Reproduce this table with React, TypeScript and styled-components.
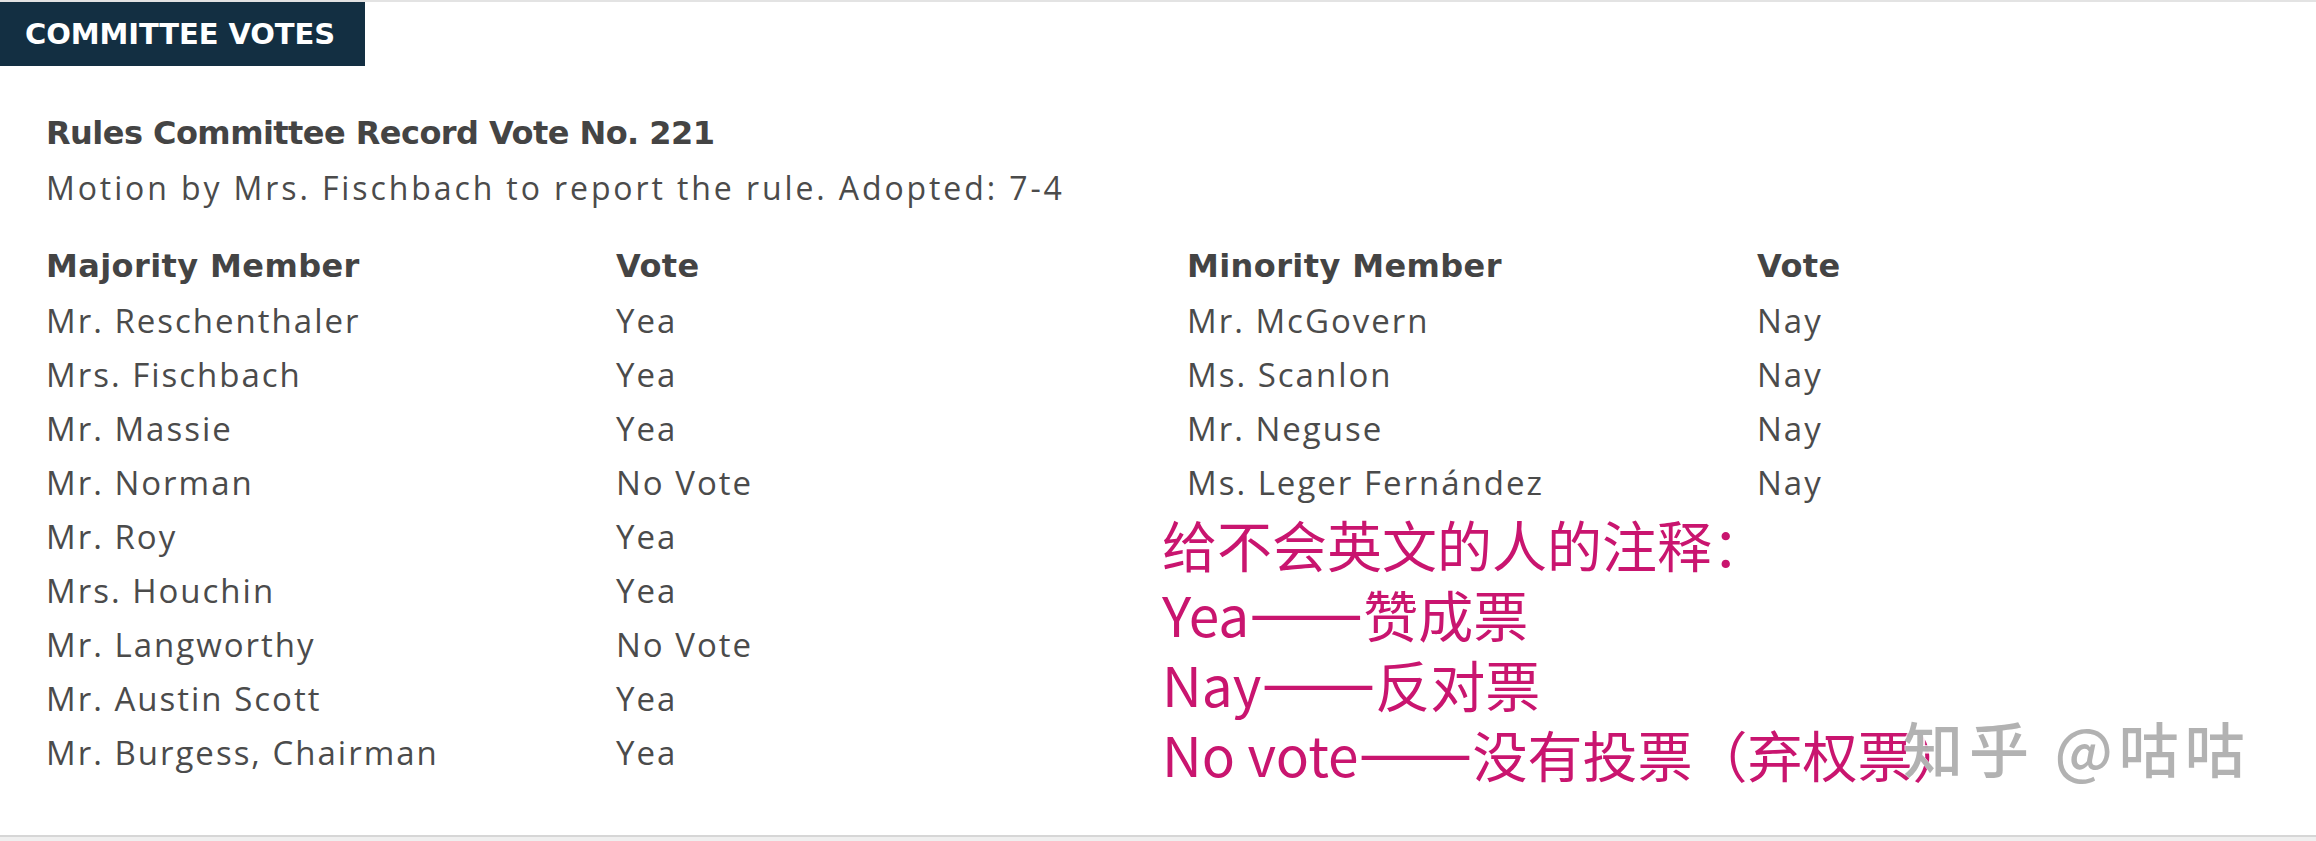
import React from 'react';
import styled, { createGlobalStyle } from 'styled-components';

const GlobalStyle = createGlobalStyle`
	html, body {
		margin: 0;
		padding: 0;
		background: #efefef;
	}
	body {
		font-family: 'Open Sans', 'Liberation Sans', sans-serif;
	}
`;

const Card = styled.section`
	position: relative;
	box-sizing: border-box;
	height: 837px;
	background: #fff;
	border-top: 2px solid #e3e3e3;
	border-bottom: 2px solid #d6d6d6;
	overflow: hidden;
`;

const SectionTab = styled.div`
	display: flex;
	align-items: center;
	width: 365px;
	height: 64px;
	box-sizing: border-box;
	padding-left: 25px;
	background: #132f42;
	color: #fff;
	font-family: 'DejaVu Sans', 'Liberation Sans', sans-serif;
	font-weight: 700;
	font-size: 29px;
	letter-spacing: -0.1px;
	text-transform: uppercase;
`;

const Body = styled.div`
	padding: 40px 0 0 46px;
	color: #4b4b4b;
`;

const Title = styled.h2`
	margin: 0;
	height: 54px;
	line-height: 54px;
	font-family: 'DejaVu Sans', 'Liberation Sans', sans-serif;
	font-weight: 700;
	font-size: 32px;
	letter-spacing: -0.55px;
	color: #444;
`;

const Motion = styled.p`
	margin: 1px 0 0;
	line-height: 54px;
	font-size: 32px;
	letter-spacing: 2.9px;
	font-weight: 400;
`;

const Tables = styled.div`
	display: flex;
	margin-top: 24px;
`;

const VoteTable = styled.div`
	display: grid;
	grid-template-columns: 570px 571px;
	grid-auto-rows: 54px;
	align-items: center;
`;

const HeadCell = styled.div`
	font-family: 'DejaVu Sans', 'Liberation Sans', sans-serif;
	font-weight: 700;
	font-size: 32px;
	letter-spacing: 0.4px;
	color: #444;
`;

const Cell = styled.div`
	font-size: 33px;
	letter-spacing: 2px;
	white-space: nowrap;
`;

const Note = styled.div`
	position: absolute;
	left: 1162px;
	top: 506px;
	color: #c9156f;
	font-family: 'Noto Sans CJK SC', sans-serif;
	font-size: 55px;
	line-height: 70px;
	white-space: nowrap;
`;

const Dash = styled.span`
	font-size: 68px;
	line-height: 0;
`;

const Watermark = styled.div`
	position: absolute;
	left: 1903px;
	top: 705px;
	color: rgba(165, 165, 165, 0.85);
	font-family: 'Noto Sans CJK SC', sans-serif;
	font-weight: 500;
	font-size: 60px;
	line-height: 80px;
	letter-spacing: 6px;
	text-shadow: 2px 2px 0 rgba(255, 255, 255, 0.9), -1px -1px 0 rgba(255, 255, 255, 0.7);
	white-space: nowrap;
`;

type Row = [string, string];

const majority: Row[] = [
	['Mr. Reschenthaler', 'Yea'],
	['Mrs. Fischbach', 'Yea'],
	['Mr. Massie', 'Yea'],
	['Mr. Norman', 'No Vote'],
	['Mr. Roy', 'Yea'],
	['Mrs. Houchin', 'Yea'],
	['Mr. Langworthy', 'No Vote'],
	['Mr. Austin Scott', 'Yea'],
	['Mr. Burgess, Chairman', 'Yea'],
];

const minority: Row[] = [
	['Mr. McGovern', 'Nay'],
	['Ms. Scanlon', 'Nay'],
	['Mr. Neguse', 'Nay'],
	['Ms. Leger Fernández', 'Nay'],
];

const notes: Row[] = [
	['Yea', '赞成票'],
	['Nay', '反对票'],
	['No vote', '没有投票（弃权票）'],
];

function Table({ title, rows }: { title: string; rows: Row[] }) {
	return (
		<VoteTable>
			<HeadCell>{title}</HeadCell>
			<HeadCell>Vote</HeadCell>
			{rows.map(([name, vote]) => (
				<React.Fragment key={name}>
					<Cell>{name}</Cell>
					<Cell>{vote}</Cell>
				</React.Fragment>
			))}
		</VoteTable>
	);
}

export default function App() {
	return (
		<>
			<GlobalStyle />
			<Card>
				<SectionTab>Committee Votes</SectionTab>
				<Body>
					<Title>Rules Committee Record Vote No. 221</Title>
					<Motion>Motion by Mrs. Fischbach to report the rule. Adopted: 7-4</Motion>
					<Tables>
						<Table title="Majority Member" rows={majority} />
						<Table title="Minority Member" rows={minority} />
					</Tables>
				</Body>
				<Note>
					<div>给不会英文的人的注释：</div>
					{notes.map(([en, zh]) => (
						<div key={en}>
							{en}
							<Dash>——</Dash>
							{zh}
						</div>
					))}
				</Note>
				<Watermark>知乎 @咕咕</Watermark>
			</Card>
		</>
	);
}
